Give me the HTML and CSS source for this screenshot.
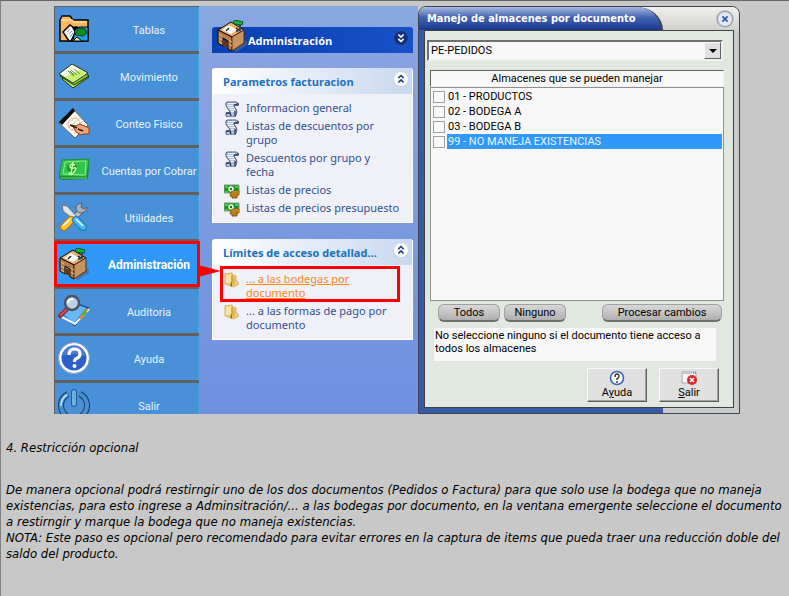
FILE: index.html
```html
<!DOCTYPE html>
<html lang="es">

<head>
    <meta charset="UTF-8">
    <meta name="viewport" content="width=device-width, initial-scale=1.0">
    <title>Restricción opcional</title>
    <link rel="stylesheet" href="styles.css">
</head>
<body>

    <!-- Shared icons -->
    <svg class="icon-defs" width="0" height="0" aria-hidden="true">
        <symbol id="desk" viewBox="0 0 32 32">
            <path d="M16 28l4 4 11-7v-4l-6-1z" fill="#52688c" opacity=".7"/>
            <path d="M2 10L15 2l13 8-12 7z" fill="#e8b070" stroke="#100800"/>
            <path d="M2 10l14 7v14l-4-2v-8l-5-3v8l-5-3z" fill="#b87c48" stroke="#100800"/>
            <path d="M16 17l12-7v13l-12 8z" fill="#c89460" stroke="#503010"/>
            <path d="M3 14l3 2M3 18l3 2M3 22l3 2M13 20l3 2M13 24l3 2" stroke="#f0c088"/>
            <path d="M7 20v6l5 2v-6z" fill="#5c3818"/>
            <path d="M6 10l7-5 8 5-6 4z" fill="#fff"/>
            <path d="M13 8l-3 3M20 8l3 2" stroke="#222" stroke-width="1.5"/>
            <path d="M17 2l2-2 8 2-1 3-8-1z" fill="#18b830" stroke="#053"/>
            <path d="M24 5v5l-4 1" fill="none" stroke="#345" stroke-width="2"/>
        </symbol>
        <symbol id="scroll" viewBox="0 0 16 16">
            <path d="M3 1h9q2 0 2 3h-4q0 2 2 4 2 3 0 6l-1 2H4q-3 0-2-4h4Q6 10 4 8 1 5 2 2z" fill="#b0c0dc" stroke="#506080"/>
            <path d="M4 2.500h7M3 4.500h6M4 6.500h6M6 8.500h5M7 10.500h5" stroke="#f0f6ff"/>
            <path d="M10 4h4V2M2 12h4l1 3M11 10v5" fill="none" stroke="#304060" stroke-width="1.500"/>
        </symbol>
        <symbol id="money" viewBox="0 0 16 16">
            <path d="M0 2h15v8H0z" fill="#18941c" stroke="#8a9a8a"/>
            <path d="M1 3h3v2H1zM11 3h3v2h-3zM1 8h3v2H1z" fill="#50c850"/>
            <circle cx="7" cy="6" r="2" fill="#148018" stroke="#f4fff4" stroke-width="1.500"/>
            <path d="M7 9l2-1h6v4h-2v3H8v-2H6z" fill="#f4b840" stroke="#925a08"/>
            <path d="M7 10h7M7 12h7M8 14h5" stroke="#7a4804"/>
        </symbol>
        <symbol id="folder" viewBox="0 0 16 16">
            <path d="M1 2l7-1 1 2 3 1v5l2 1v3l-5 2-8-3z" fill="#f0cc74" stroke="#dcb464"/>
            <path d="M2 3l5-1v8l-5 1z" fill="#fae4a4"/>
            <path d="M8 4l3 1v7l-3 2z" fill="#e4b860"/>
            <path d="M8 9v6l-2-2z" fill="#94702c"/>
            <path d="M8 3v7" stroke="#b88c3c"/>
        </symbol>
        <symbol id="help" viewBox="0 0 32 32">
            <circle cx="16" cy="16" r="14" fill="#2c60c8" stroke="#fff" stroke-width="3"/>
            <circle cx="16" cy="16" r="15.500" fill="none" stroke="#8aa0c8"/>
            <path d="M5 14a11 11 0 0 1 22 0q-10-4-22 0z" fill="#668fe0" opacity=".6"/>
            <path d="M11 13q0-6 5.500-6T22 12q0 3-3.500 4.500Q16.500 17.500 16.500 20" fill="none" stroke="#fff" stroke-width="3.200"/>
            <circle cx="16.500" cy="24" r="2" fill="#fff"/>
        </symbol>
        <symbol id="chevrons" viewBox="0 0 16 16">
            <path d="M5 7l3-3 3 3M5 12l3-3 3 3" fill="none" stroke="currentColor" stroke-width="1.800"/>
        </symbol>
    </svg>

    <!-- Application window -->
    <div class="app">

        <nav class="main-menu">
            <a class="menu-item" href="#tablas">
                <svg class="menu-icon" viewBox="0 0 32 32">
                    <path d="M2 28V7l2-4h8l3 4h15v21z" fill="#ffb860" stroke="#000" stroke-width="1.500"/>
                    <path d="M3 7h11l2 2h13" fill="none" stroke="#ffdf9e" stroke-width="1.500"/>
                    <path d="M5 19l7-7 3 2 3 4-5 10h-2z" fill="#f8faff" stroke="#000" stroke-width="1.500"/>
                    <path d="M9 19l3-3m-1 5l3-3m-2 6l3-4" stroke="#7890a8"/>
                    <path d="M14 14l5-1 2 3-4 4z" fill="#000"/>
                    <path d="M15 28l2-11 4-3h9v14z" fill="#18a0e8" stroke="#000"/>
                    <path d="M17 21l4-6 6 1 2 4-4 3-7-1z" fill="#118c18" stroke="#042"/>
                    <path d="M15 28l4-4 5 4z" fill="#f4e8b0" stroke="#000"/>
                </svg>
                <span>Tablas</span>
            </a>
            <a class="menu-item" href="#movimiento">
                <svg class="menu-icon" viewBox="0 0 32 32">
                    <path d="M4 19l15-8 12 6-16 11z" fill="#b8e858" stroke="#143008"/>
                    <path d="M2 16L16 6l15 10-15 9z" fill="#8cc830" stroke="#143008"/>
                    <path d="M1 14L14 4l16 9-15 10z" fill="#f4ffe4" stroke="#243818"/>
                    <path d="M7 17l8 5 13-9-6-3z" fill="#c8f46c"/>
                    <path d="M10 11l6 5m-3-6l6 5m-3-6l6 5m-10-3l4 4" stroke="#618760"/>
                </svg>
                <span>Movimiento</span>
            </a>
            <a class="menu-item" href="#conteo">
                <svg class="menu-icon" viewBox="0 0 32 32">
                    <path d="M1 16L15 2l15 16-13 13z" fill="#fffdf2" stroke="#6c6252"/>
                    <path d="M1 15L15 1l2 3L4 18z" fill="#080808"/>
                    <path d="M8 18l11-9M10 21L22 11M13 24l12-10M16 27l12-10" stroke="#d0d2b5"/>
                    <circle cx="16" cy="17" r="6" fill="none" stroke="#f6a6b0"/>
                    <path d="M13 18l5 1 4-2 9 4v6h-5l-3 1-5-3-2-4z" fill="#eea47a" stroke="#8a3c1c"/>
                    <path d="M12 18l7 3M20 22l5 2" stroke="#421808" stroke-width="1.500"/>
                </svg>
                <span>Conteo Fisico</span>
            </a>
            <a class="menu-item" href="#cuentas">
                <svg class="menu-icon" viewBox="0 0 32 32">
                    <path d="M1 24L4 8l27-1-1 18-26 1z" fill="#14842c"/>
                    <path d="M1 22L4 6l27-1-2 18z" fill="#34c44c" stroke="#189034"/>
                    <path d="M5 20L7 8l21-1-1 14z" fill="none" stroke="#8cec80"/>
                    <circle cx="14" cy="14" r="5" fill="#16982c"/>
                    <path d="M17 11q-5-2-5 1t4 2 0 4-5 0M15 8l-2 12" fill="none" stroke="#c8ff9c" stroke-width="1.500"/>
                    <path d="M3 24h26" stroke="#72dc70"/>
                </svg>
                <span>Cuentas por Cobrar</span>
            </a>
            <a class="menu-item" href="#utilidades">
                <svg class="menu-icon" viewBox="0 0 32 32">
                    <path d="M16 17L25 8" stroke="#59616e" stroke-width="6"/>
                    <path d="M16 17L25 8" stroke="#bdc5cf" stroke-width="4"/>
                    <path d="M18 6q1-4 6-4l-1 4 3 2 3-2q0 5-6 6-5 0-5-6z" fill="#a8b0bd" stroke="#59616e"/>
                    <path d="M4 4l5 1 13 14-3 2L5 10z" fill="#dfe6eb" stroke="#68747f"/>
                    <path d="M13 19L6 26" stroke="#b87806" stroke-width="8" stroke-linecap="round"/>
                    <path d="M13 19L6 26" stroke="#ffc42c" stroke-width="6" stroke-linecap="round"/>
                    <path d="M18 19l7 7" stroke="#1a78b4" stroke-width="8" stroke-linecap="round"/>
                    <path d="M18 19l7 7" stroke="#44b8f4" stroke-width="6" stroke-linecap="round"/>
                    <path d="M18 18l7 7M12 18l-7 7" stroke="#e6f8ff" stroke-width="1.500"/>
                </svg>
                <span>Utilidades</span>
            </a>
            <a class="menu-item active" href="#administracion">
                <svg class="menu-icon"><use href="#desk"/></svg>
                <span>Administración</span>
                <svg class="callout-arrow" viewBox="0 0 23 12"><path d="M0 0l23 6-23 6z" fill="#f00"/></svg>
            </a>
            <a class="menu-item" href="#auditoria">
                <svg class="menu-icon" viewBox="0 0 32 32">
                    <path d="M4 21l13-13 14 5-14 18z" fill="#2478d8" stroke="#163c78"/>
                    <path d="M6 20L17 9l11 4-12 15z" fill="#67b8f4"/>
                    <path d="M4 22l13 7 14-15" fill="none" stroke="#f4faff" stroke-width="2"/>
                    <path d="M22 24l7-10" stroke="#f08420" stroke-width="3"/>
                    <path d="M25 20l3-4" stroke="#44b838" stroke-width="3"/>
                    <path d="M9 14l-8 8" stroke="#891c24" stroke-width="4"/>
                    <path d="M9 14l-7 7" stroke="#dc5048" stroke-width="2"/>
                    <circle cx="14" cy="8" r="7" fill="#b8d0e8" stroke="#4c5464" stroke-width="2.500"/>
                    <path d="M10 8q0-4 5-4" fill="none" stroke="#fff" stroke-width="2"/>
                </svg>
                <span>Auditoria</span>
            </a>
            <a class="menu-item" href="#ayuda">
                <svg class="menu-icon"><use href="#help"/></svg>
                <span>Ayuda</span>
            </a>
            <a class="menu-item cut" href="#salir">
                <svg class="menu-icon" viewBox="0 0 32 32">
                    <path d="M10 5a13 13 0 1 0 12 0" fill="none" stroke="#183e68" stroke-width="6"/>
                    <path d="M10 5a13 13 0 1 0 12 0" fill="none" stroke="#4a90d0" stroke-width="4"/>
                    <path d="M9 6a12 12 0 0 0-6 11" fill="none" stroke="#c4e8ff" stroke-width="1.500"/>
                    <path d="M16 3v12" stroke="#285888" stroke-width="6" stroke-linecap="round"/>
                    <path d="M16 3v12" stroke="#68b0e8" stroke-width="4" stroke-linecap="round"/>
                </svg>
                <span>Salir</span>
            </a>
        </nav>

        <div class="side-panel">
            <div class="panel-title">
                <svg class="panel-icon"><use href="#desk"/></svg>
                <h2>Administración</h2>
                <button class="toggle dark" aria-label="Expandir"><svg><use href="#chevrons"/></svg></button>
            </div>

            <div class="group">
                <div class="group-head">
                    <h3>Parametros facturacion</h3>
                    <button class="toggle" aria-label="Contraer"><svg><use href="#chevrons"/></svg></button>
                </div>
                <ul>
                    <li><svg><use href="#scroll"/></svg><a href="#general">Informacion general</a></li>
                    <li><svg><use href="#scroll"/></svg><a href="#grupo">Listas de descuentos por grupo</a></li>
                    <li><svg><use href="#scroll"/></svg><a href="#fecha">Descuentos por grupo y fecha</a></li>
                    <li><svg><use href="#money"/></svg><a href="#precios">Listas de precios</a></li>
                    <li><svg><use href="#money"/></svg><a href="#presupuesto">Listas de precios presupuesto</a></li>
                </ul>
            </div>

            <div class="group">
                <div class="group-head">
                    <h3>Límites de acceso detallad...</h3>
                    <button class="toggle" aria-label="Contraer"><svg><use href="#chevrons"/></svg></button>
                </div>
                <ul>
                    <li class="marked"><svg><use href="#folder"/></svg><a href="#bodegas">... a las bodegas por documento</a></li>
                    <li><svg><use href="#folder"/></svg><a href="#pago">... a las formas de pago por documento</a></li>
                </ul>
            </div>
        </div>

        <!-- Dialog -->
        <div class="dialog">
            <div class="dialog-title">
                <h2>Manejo de almacenes por documento</h2>
                <button class="close" aria-label="Cerrar">
                    <svg viewBox="0 0 16 16"><path d="M5 5l6 6M11 5l-6 6" stroke="#3460b4" stroke-width="2.200"/></svg>
                </button>
            </div>
            <form class="dialog-body">
                <div class="combo">
                    <select aria-label="Documento">
                        <option>PE-PEDIDOS</option>
                    </select>
                    <span class="combo-arrow"></span>
                </div>

                <div class="list-head">Almacenes que se pueden manejar</div>
                <div class="list">
                    <label><input type="checkbox"><span>01 - PRODUCTOS</span></label>
                    <label><input type="checkbox"><span>02 - BODEGA A</span></label>
                    <label><input type="checkbox"><span>03 - BODEGA B</span></label>
                    <label class="selected"><input type="checkbox"><span>99 - NO MANEJA EXISTENCIAS</span></label>
                </div>

                <div class="pills">
                    <button type="button">Todos</button>
                    <button type="button">Ninguno</button>
                    <button type="button" class="process">Procesar cambios</button>
                </div>

                <p class="note">No seleccione ninguno si el documento tiene acceso a todos los almacenes</p>

                <div class="actions">
                    <button type="button">
                        <svg viewBox="0 0 16 16">
                            <circle cx="8" cy="8" r="6.500" fill="#fff" stroke="#3c68b8" stroke-width="1.600"/>
                            <path d="M6 7q0-3 2-3t2 2-2 3v1M8 11v2" fill="none" stroke="#333" stroke-width="1.400"/>
                        </svg>
                        <span>A<u>y</u>uda</span>
                    </button>
                    <button type="button">
                        <svg viewBox="0 0 16 16">
                            <path d="M1 2h14v11H1z" fill="#f4f4f4" stroke="#a4a8b0"/>
                            <path d="M1 3h10" stroke="#c4c8d0" stroke-width="2"/>
                            <path d="M12 3h1M14 3h1" stroke="#445"/>
                            <circle cx="11" cy="10" r="5" fill="#d82828"/>
                            <path d="M9 8l4 4M13 8l-4 4" stroke="#fff" stroke-width="1.600"/>
                        </svg>
                        <span><u>S</u>alir</span>
                    </button>
                </div>
            </form>
        </div>
    </div>

    <!-- Explanation -->
    <div class="text">
        <h1>4. Restricción opcional</h1>
        <p>De manera opcional podrá restirngir uno de los dos documentos (Pedidos o Factura) para que solo use la bodega que no maneja existencias, para esto ingrese a Adminsitración/... a las bodegas por documento, en la ventana emergente seleccione el documento a restirngir y marque la bodega que no maneja existencias.</p>
        <p>NOTA: Este paso es opcional pero recomendado para evitar errores en la captura de items que pueda traer una reducción doble del saldo del producto.</p>
    </div>

</body>
</html>
```
FILE: styles.css
```css
* {
    box-sizing: border-box;
}
body {
    margin: 0;
    min-height: 100vh;
    background-color: #c8c8c8;
    border-top: 1px solid #666;
    border-left: 1px solid #808080;
    font-family: Roboto, "Liberation Sans", sans-serif;
    font-size: 11px;
    color: #000;
}
h1, h2, h3, p, ul {
    margin: 0;
    padding: 0;
}
button {
    font-family: inherit;
    font-size: 11px;
    padding: 0;
}
.icon-defs {
    position: absolute;
}
.app {
    display: grid;
    grid-template-columns: 145px 219px 1fr;
    margin: 5px 49px 0 53px;
}
/* Left menu */
.main-menu {
    display: flex;
    flex-direction: column;
    gap: 3px;
    padding: 1px 0 0 1px;
    background-color: #606060;
}
.menu-item {
    display: flex;
    align-items: center;
    height: 44px;
    padding-left: 3px;
    background-color: #4890d8;
    border-right: 1px solid #38a8d8;
    color: #e8f4ff;
    text-decoration: none;
}
.menu-item span {
    flex: 1;
    text-align: center;
    padding: 2px 0 0 10px;
    white-space: nowrap;
}
.menu-icon {
    width: 32px;
    height: 32px;
}
.menu-item.active {
    position: relative;
    background-color: #3098f8;
    color: #fff;
    font-size: 12px;
    font-weight: bold;
    outline: 3px solid #f00;
    outline-offset: -2px;
    z-index: 2;
}
.callout-arrow {
    position: absolute;
    left: 100%;
    top: 23px;
    width: 23px;
    height: 12px;
}
.menu-item.cut {
    height: 31px;
    align-items: flex-start;
    overflow: hidden;
    padding-top: 6px;
}
.menu-item.cut span {
    padding-top: 11px;
}
/* Task panel */
.side-panel {
    padding: 21px 5px 0 13px;
    background: linear-gradient(#88a8e0, #88a0e0 20%, #7898e0 60%, #7090e0);
    font-family: "Noto Sans", "Open Sans", sans-serif;
}
.panel-title {
    display: flex;
    align-items: center;
    height: 26px;
    padding: 0 4px;
    border-radius: 3px 3px 0 0;
    background: linear-gradient(to right, #0840b0, #1850c8);
    color: #fff;
}
.panel-icon {
    width: 32px;
    height: 32px;
    margin-top: -8px;
}
.panel-title h2,
.group-head h3 {
    font-family: "Open Sans", "Noto Sans", sans-serif;
    font-size: 11px;
    white-space: nowrap;
}
.panel-title h2 {
    flex: 1;
}
.toggle {
    width: 16px;
    height: 16px;
    border: 1px solid #c8d4e8;
    border-radius: 50%;
    background-color: #fff;
    color: #203c78;
}
.toggle svg {
    display: block;
    width: 14px;
    height: 14px;
}
.toggle.dark {
    margin-top: -5px;
    background-color: #103080;
    border-color: #3058b0;
    color: #fff;
}
.toggle.dark svg {
    transform: rotate(180deg);
}
.group {
    margin-top: 15px;
    background-color: #f0f0f8;
    border: 1px solid #fff;
    border-top: none;
    border-radius: 3px 3px 0 0;
}
.group + .group {
    margin-top: 16px;
}
.group-head {
    display: flex;
    justify-content: space-between;
    align-items: center;
    height: 26px;
    padding: 0 3px 0 10px;
    border-radius: 3px 3px 0 0;
    background: linear-gradient(to right, #fff, #c8d8f0);
    color: #2070c0;
}
.group-head .toggle {
    margin-top: -5px;
}
.group ul {
    display: flex;
    flex-direction: column;
    gap: 4px;
    padding: 7px 12px 7px 11px;
    list-style: none;
}
.group li {
    position: relative;
    display: flex;
    gap: 6px;
    line-height: 14px;
}
.group li svg {
    flex: none;
    width: 16px;
    height: 16px;
    margin-bottom: -2px;
}
.group li a {
    color: #305090;
    text-decoration: none;
}
.group li.marked a {
    color: #f88818;
    text-decoration: underline;
}
.marked::after {
    content: "";
    position: absolute;
    left: -4px;
    right: 0;
    top: -6px;
    bottom: -2px;
    border: 3px solid #f00;
}
/* Dialog */
.dialog {
    display: flex;
    flex-direction: column;
    padding: 0 5px 5px;
    border: 1px solid #404450;
    border-radius: 8px 8px 0 0;
    background: linear-gradient(to right, #3858a8 244px, #c8ccd0 244px);
}
.dialog-title {
    display: flex;
    justify-content: space-between;
    align-items: center;
    height: 23px;
    margin: 0 -5px;
    padding-right: 6px;
    border-radius: 7px 7px 0 0;
    background: linear-gradient(#f0f0ec, #d0d0cc);
}
.dialog-title h2 {
    width: 244px;
    height: 23px;
    padding-left: 8px;
    line-height: 23px;
    font-size: 11px;
    font-family: "DejaVu Sans Condensed", "DejaVu Sans", sans-serif;
    white-space: nowrap;
    color: #fff;
    background: linear-gradient(#a8b8e0, #4464b0 45%, #183890);
    border-right: 2px solid #404450;
    border-radius: 7px 26px 0 0 / 7px 23px 0 0;
}
.close {
    width: 16px;
    height: 16px;
    border: 1px solid #8898b0;
    border-radius: 50%;
    background-color: #e4e8f0;
    box-shadow: 0 0 0 1px #c0c0c0;
}
.close svg {
    display: block;
    width: 14px;
    height: 14px;
}
.dialog-body {
    flex: 1;
    display: flex;
    flex-direction: column;
    padding: 9px 9px 5px 5px;
    border: 1px solid #404040;
    background-color: #e0e8e0;
}
.combo {
    position: relative;
    height: 21px;
    margin: 0 1px 0 -3px;
}
.combo select {
    width: 100%;
    height: 21px;
    padding: 0 2px;
    appearance: none;
    border: 2px solid;
    border-color: #707070 #f0f0f0 #f0f0f0 #707070;
    border-radius: 0;
    background-color: #f8f8f8;
    font-family: inherit;
    font-size: 11px;
    color: #000;
}
.combo-arrow {
    position: absolute;
    top: 2px;
    right: 2px;
    width: 17px;
    height: 17px;
    border: 1px solid;
    border-color: #f8f8f8 #606060 #606060 #f8f8f8;
    background-color: #e0e0e0;
    pointer-events: none;
}
.combo-arrow::after {
    content: "";
    position: absolute;
    left: 4px;
    top: 6px;
    border: 4px solid transparent;
    border-top-color: #000;
    border-bottom: none;
}
.list-head {
    height: 17px;
    margin-top: 9px;
    border: 1px solid;
    border-color: #606060 #f0f0f0 #f0f0f0 #606060;
    background-color: #f8f8f8;
    line-height: 15px;
    text-align: center;
}
.list {
    height: 214px;
    padding: 1px 1px 1px 2px;
    border: 1px solid #909090;
    background-color: #f8f8f8;
}
.list label {
    display: flex;
    align-items: center;
    gap: 2px;
    height: 15px;
}
.list input {
    appearance: none;
    width: 12px;
    height: 12px;
    margin: 0;
    border: 1px solid #a0a0a0;
    background-color: #f8f8f8;
}
.list span {
    flex: 1;
    line-height: 15px;
    padding-left: 1px;
}
.list .selected span {
    background-color: #3098f8;
    color: #e8f4ff;
    outline: 1px dotted #c87840;
    outline-offset: -1px;
}
.pills {
    display: flex;
    gap: 4px;
    padding: 3px 2px 0 8px;
}
.pills button {
    width: 62px;
    height: 18px;
    border: 1px solid #a0a0a0;
    border-bottom: 2px solid #707070;
    border-radius: 6px;
    background: linear-gradient(#d8d8d8, #b0b0b0);
}
.pills .process {
    width: 120px;
    margin-left: auto;
}
.note {
    margin: 6px 8px 0 4px;
    padding: 1px 0 6px 1px;
    line-height: 13px;
    background-color: #f8f8f8;
}
.actions {
    display: flex;
    justify-content: flex-end;
    gap: 12px;
    padding: 7px 5px 0;
}
.actions button {
    display: flex;
    flex-direction: column;
    align-items: center;
    width: 60px;
    height: 34px;
    padding-top: 1px;
    border: 1px solid;
    border-color: #f8f8f8 #606060 #606060 #f8f8f8;
    box-shadow: inset -1px -1px #a0a0a0;
    background-color: #e0e0e0;
    line-height: 13px;
}
.actions svg {
    width: 16px;
    height: 16px;
}
/* Text below the window */
.text {
    padding: 26px 5px 16px;
    font-family: "DejaVu Sans Condensed", "DejaVu Sans", sans-serif;
    font-size: 13px;
    font-style: italic;
    line-height: 16px;
}
.text h1 {
    margin-bottom: 26px;
    font-size: 13px;
    font-weight: normal;
}
```
